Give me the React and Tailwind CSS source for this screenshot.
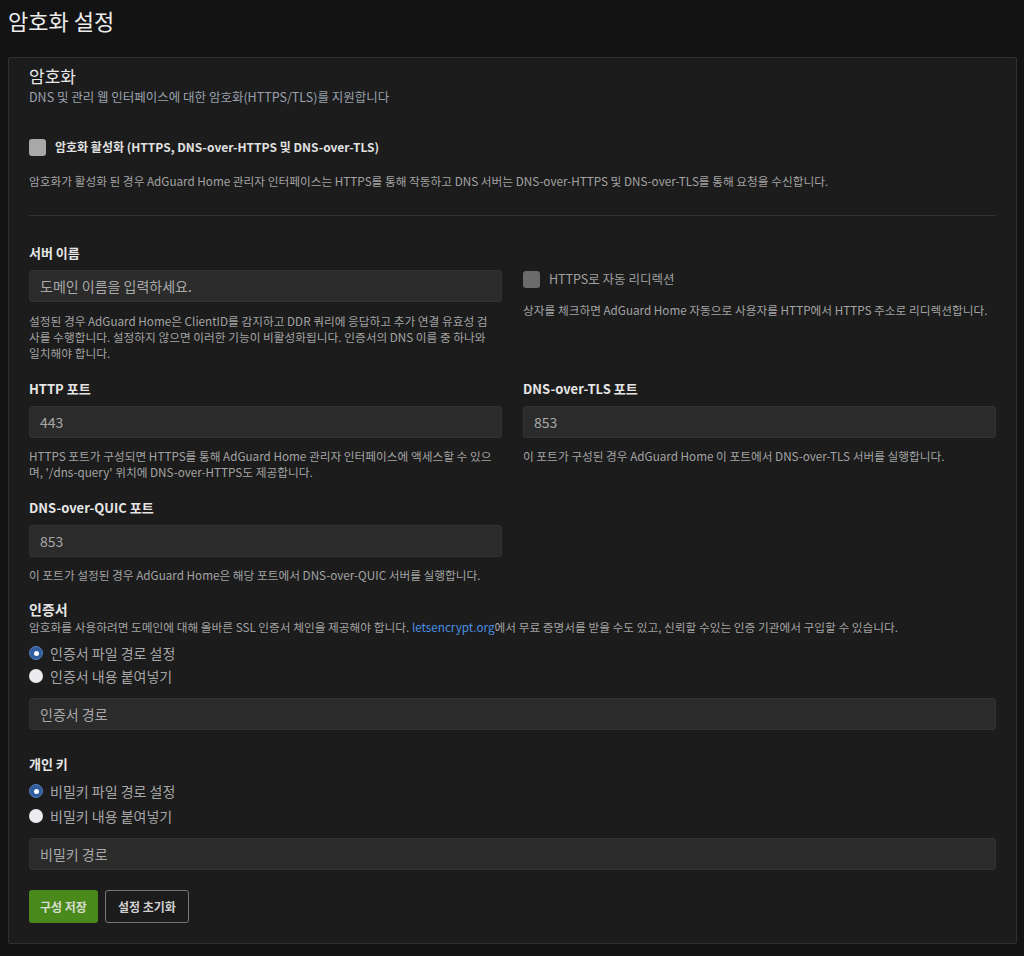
import React from "react";

const font = { fontFamily: '"Noto Sans CJK KR", "Noto Sans", sans-serif' };

function Checkbox({ disabled }) {
  return (
    <span
      className={`inline-block w-[17px] h-[17px] rounded-[3px] shrink-0 ${
        disabled ? "bg-[#6b6b6b]" : "bg-[#a8a8a8]"
      }`}
    />
  );
}

function Radio({ checked }) {
  return checked ? (
    <span className="inline-flex items-center justify-center w-[14px] h-[14px] rounded-full bg-[#2f5d9e] border border-[#5a7fb8] shrink-0">
      <span className="w-[5px] h-[5px] rounded-full bg-white" />
    </span>
  ) : (
    <span className="inline-block w-[14px] h-[14px] rounded-full bg-[#ececf0] shrink-0" />
  );
}

function Input({ placeholder }) {
  return (
    <div className="h-[32px] rounded-[3px] bg-[#2b2b2b] border border-[#323232] flex items-center px-[10px] text-[14px] text-[#a9a9a9]">
      {placeholder}
    </div>
  );
}

function Label({ children }) {
  return <div className="text-[13px] font-semibold text-[#e6e6e6] leading-[18px] mb-[8px]">{children}</div>;
}

function Help({ children, className = "" }) {
  return <div className={`text-[11.7px] leading-[16px] text-[#a3a3a3] ${className}`}>{children}</div>;
}

export default function App() {
  return (
    <div className="min-h-[956px] bg-[#131313] text-[#e6e6e6]" style={font}>
      <div className="pl-[8px] pr-[7px] pt-[5px] pb-[14px]">
        <h1 className="text-[22px] leading-[30px] text-[#ececec] font-normal">암호화 설정</h1>
        <div className="mt-[22px] border border-[#303030] rounded-[2px] bg-[#1c1c1c] px-[20px] pt-[6px] pb-[20px]">
          <div className="text-[17px] leading-[24px] text-[#e8e8e8]">암호화</div>
          <div className="text-[12.5px] leading-[18px] text-[#9aa1ad] mt-[0px]">
            DNS 및 관리 웹 인터페이스에 대한 암호화(HTTPS/TLS)를 지원합니다
          </div>

          <div className="mt-[32px] flex items-center gap-[9px]">
            <Checkbox />
            <span className="text-[12px] font-semibold text-[#e0e0e0]">
              암호화 활성화 (HTTPS, DNS-over-HTTPS 및 DNS-over-TLS)
            </span>
          </div>
          <Help className="mt-[17px]">
            암호화가 활성화 된 경우 AdGuard Home 관리자 인터페이스는 HTTPS를 통해 작동하고 DNS 서버는 DNS-over-HTTPS 및 DNS-over-TLS를 통해 요청을 수신합니다.
          </Help>

          <div className="border-t border-[#333] mt-[26px]" />

          <div className="grid grid-cols-2 gap-x-[21px] mt-[28px]">
            <div>
              <Label>서버 이름</Label>
              <Input placeholder="도메인 이름을 입력하세요." />
              <Help className="mt-[11px] pr-[10px]">
                설정된 경우 AdGuard Home은 ClientID를 감지하고 DDR 쿼리에 응답하고 추가 연결 유효성 검사를 수행합니다. 설정하지 않으면 이러한 기능이 비활성화됩니다. 인증서의 DNS 이름 중 하나와 일치해야 합니다.
              </Help>
            </div>
            <div className="pt-[26px]">
              <div className="flex items-center gap-[9px]">
                <Checkbox disabled />
                <span className="text-[12.5px] text-[#a0a0a0]">HTTPS로 자동 리디렉션</span>
              </div>
              <Help className="mt-[13px]">
                상자를 체크하면 AdGuard Home 자동으로 사용자를 HTTP에서 HTTPS 주소로 리디렉션합니다.
              </Help>
            </div>

            <div className="mt-[19px]">
              <Label>HTTP 포트</Label>
              <Input placeholder="443" />
              <Help className="mt-[10px] pr-[10px]">
                HTTPS 포트가 구성되면 HTTPS를 통해 AdGuard Home 관리자 인터페이스에 액세스할 수 있으며, '/dns-query' 위치에 DNS-over-HTTPS도 제공합니다.
              </Help>
            </div>
            <div className="mt-[19px]">
              <Label>DNS-over-TLS 포트</Label>
              <Input placeholder="853" />
              <Help className="mt-[10px]">
                이 포트가 구성된 경우 AdGuard Home 이 포트에서 DNS-over-TLS 서버를 실행합니다.
              </Help>
            </div>

            <div className="mt-[19px]">
              <Label>DNS-over-QUIC 포트</Label>
              <Input placeholder="853" />
              <Help className="mt-[10px]">
                이 포트가 설정된 경우 AdGuard Home은 해당 포트에서 DNS-over-QUIC 서버를 실행합니다.
              </Help>
            </div>
            <div />
          </div>

          <div className="mt-[17px] text-[14px] font-semibold leading-[18px] text-[#e6e6e6]">인증서</div>
          <Help className="mt-[1px]">
            암호화를 사용하려면 도메인에 대해 올바른 SSL 인증서 체인을 제공해야 합니다.{" "}
            <span className="text-[#4a8fe0]">letsencrypt.org</span>에서 무료 증명서를 받을 수도 있고, 신뢰할 수있는 인증 기관에서 구입할 수 있습니다.
          </Help>
          <div className="mt-[11px] flex flex-col gap-[9px]">
            <div className="flex items-center gap-[7px]">
              <Radio checked />
              <span className="text-[14px] text-[#a6a6a6] leading-[14px]">인증서 파일 경로 설정</span>
            </div>
            <div className="flex items-center gap-[7px]">
              <Radio />
              <span className="text-[14px] text-[#a6a6a6] leading-[14px]">인증서 내용 붙여넣기</span>
            </div>
          </div>
          <div className="mt-[15px]">
            <Input placeholder="인증서 경로" />
          </div>

          <div className="mt-[25px] text-[13px] font-semibold leading-[18px] text-[#e6e6e6]">개인 키</div>
          <div className="mt-[11px] flex flex-col gap-[11px]">
            <div className="flex items-center gap-[7px]">
              <Radio checked />
              <span className="text-[14px] text-[#a6a6a6] leading-[14px]">비밀키 파일 경로 설정</span>
            </div>
            <div className="flex items-center gap-[7px]">
              <Radio />
              <span className="text-[14px] text-[#a6a6a6] leading-[14px]">비밀키 내용 붙여넣기</span>
            </div>
          </div>
          <div className="mt-[15px]">
            <Input placeholder="비밀키 경로" />
          </div>

          <div className="mt-[20px] flex gap-[7px]">
            <button className="h-[33px] px-[11px] rounded-[3px] bg-[#4a8a1c] text-[12px] font-semibold text-[#d6dccf]">
              구성 저장
            </button>
            <button className="h-[33px] px-[12px] rounded-[3px] border border-[#777] bg-transparent text-[12px] font-semibold text-[#d0d0d0]">
              설정 초기화
            </button>
          </div>
        </div>
      </div>
    </div>
  );
}
